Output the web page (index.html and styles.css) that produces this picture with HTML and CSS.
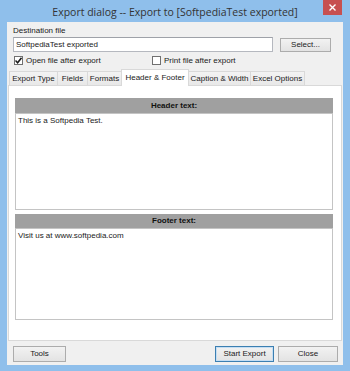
FILE: index.html
```html
<!DOCTYPE html>
<html lang="en">
<head>
    <meta charset="UTF-8">
    <title>Export dialog</title>
    <link rel="stylesheet" href="styles.css">
</head>
<body>
    <div class="window">
        <div class="titlebar">
            <div class="title">Export dialog -- Export to [SoftpediaTest exported]</div>
            <div class="close-btn">
                <svg width="7" height="7" viewBox="0 0 7 7"><path d="M0.5 0.5 L6.5 6.5 M6.5 0.5 L0.5 6.5" stroke="#ffffff" stroke-width="1.4"/></svg>
            </div>
        </div>

        <div class="client">
            <div class="dest-label">Destination file</div>
            <div class="dest-row">
                <div class="text-input">SoftpediaTest exported</div>
                <div class="btn select-btn">Select...</div>
            </div>

            <div class="check-row">
                <div class="check first">
                    <span class="box">
                        <svg width="7" height="7" viewBox="0 0 7 7"><path d="M0.5 3.5 L2.6 5.8 L6.5 0.8" fill="none" stroke="#1a1a1a" stroke-width="1.5"/></svg>
                    </span>
                    Open file after export
                </div>
                <div class="check">
                    <span class="box"></span>
                    Print file after export
                </div>
            </div>

            <div class="tabs">
                <div class="tab tab-type">Export Type</div>
                <div class="tab tab-fields">Fields</div>
                <div class="tab tab-formats">Formats</div>
                <div class="tab active">Header &amp; Footer</div>
                <div class="tab tab-caption">Caption &amp; Width</div>
                <div class="tab tab-excel">Excel Options</div>
            </div>

            <div class="panel">
                <div class="section-bar">Header text:</div>
                <div class="memo header-memo">This is a Softpedia Test.</div>
                <div class="section-bar footer-bar">Footer text:</div>
                <div class="memo footer-memo">Visit us at www.softpedia.com</div>
            </div>

            <div class="bottom-bar">
                <div class="btn tools-btn">Tools</div>
                <div class="spacer"></div>
                <div class="btn default start-btn">Start Export</div>
                <div class="btn close-dlg-btn">Close</div>
            </div>
        </div>
    </div>
</body>
</html>
```

FILE: styles.css
```css
body {
    margin: 0;
    font-family: 'Liberation Sans', Arial, sans-serif;
    font-size: 8px;
    color: #1a1a1a;
    background-color: #8fbfeb;
}

.window {
    width: 350px;
    height: 371px;
    display: flex;
    flex-direction: column;
    background-color: #8fbfeb;
}

.titlebar {
    height: 22px;
    display: flex;
    align-items: flex-start;
    padding-left: 27px;
    box-sizing: border-box;
}

.title {
    flex: 1;
    text-align: center;
    font-family: 'Open Sans', sans-serif;
    font-size: 10.5px;
    line-height: 22px;
    color: #333333;
    padding-top: 1px;
}

.close-btn {
    width: 19px;
    height: 15px;
    margin-right: 8px;
    background-color: #c75050;
    display: flex;
    align-items: center;
    justify-content: center;
}

.client {
    flex: 1;
    margin: 0 7px 6px 7px;
    background-color: #f0f0f0;
    display: flex;
    flex-direction: column;
    padding: 4px 0 3px 0;
    box-sizing: border-box;
}

.dest-label {
    height: 10px;
    line-height: 10px;
    padding-left: 6px;
}

.dest-row {
    display: flex;
    align-items: flex-end;
    margin-top: 1px;
    padding-left: 6px;
}

.text-input {
    width: 260px;
    height: 15px;
    box-sizing: border-box;
    border: 1px solid #b5b8bf;
    border-top-color: #9ea1a8;
    background-color: #ffffff;
    line-height: 13px;
    padding-left: 2px;
}

.btn {
    height: 14px;
    box-sizing: border-box;
    border: 1px solid #acacac;
    background: linear-gradient(#f2f2f2, #e3e3e3);
    text-align: center;
    line-height: 12px;
}

.select-btn {
    width: 51px;
    margin-left: 7px;
}

.check-row {
    display: flex;
    height: 11px;
    margin-top: 3px;
    padding-left: 7px;
    align-items: center;
}

.check {
    display: flex;
    align-items: center;
    gap: 3px;
    line-height: 11px;
}

.check.first {
    width: 138px;
}

.box {
    width: 9px;
    height: 9px;
    box-sizing: border-box;
    border: 1px solid #707070;
    background-color: #ffffff;
    display: flex;
    align-items: center;
    justify-content: center;
}

.tabs {
    display: flex;
    align-items: flex-end;
    height: 17px;
    margin-top: 2px;
    padding-left: 2px;
    position: relative;
    z-index: 1;
}

.tab {
    height: 14px;
    box-sizing: border-box;
    border: 1px solid #d9d9d9;
    border-bottom: none;
    border-right: none;
    background: linear-gradient(#f3f3f3, #e8e8e8);
    text-align: center;
    line-height: 13px;
    white-space: nowrap;
}

.tab-type { width: 48px; }
.tab-fields { width: 30px; }
.tab-formats { width: 34px; }
.tab-caption { width: 61px; }
.tab-excel { width: 55px; }

.tab:last-child {
    border-right: 1px solid #d9d9d9;
}

.tab.active {
    width: 68px;
    height: 17px;
    background: #ffffff;
    border-right: 1px solid #d9d9d9;
    margin-bottom: -1px;
    line-height: 15px;
}

.tab.active + .tab {
    border-left: none;
}

.panel {
    flex: 1;
    margin: 0 1px 0 1px;
    border: 1px solid #d9d9d9;
    background-color: #ffffff;
    padding: 12px 8px 0 6px;
    display: flex;
    flex-direction: column;
}

.section-bar {
    height: 15px;
    background-color: #a0a0a0;
    text-align: center;
    font-weight: bold;
    line-height: 15px;
    color: #111111;
}

.footer-bar {
    margin-top: 4px;
    height: 14px;
    line-height: 14px;
}

.memo {
    border: 1px solid #c4c4c4;
    background-color: #ffffff;
    box-sizing: border-box;
    padding: 2px 2px;
    line-height: 10px;
}

.header-memo {
    height: 97px;
}

.footer-memo {
    height: 92px;
}

.bottom-bar {
    display: flex;
    align-items: center;
    margin-top: 5px;
    padding: 0 5px 0 6px;
}

.bottom-bar .btn {
    height: 16px;
    line-height: 14px;
}

.tools-btn {
    width: 53px;
}

.spacer {
    flex: 1;
}

.start-btn {
    width: 59px;
}

.btn.default {
    border-color: #3c7fb1;
    box-shadow: inset 0 0 0 1px #c5def3;
}

.close-dlg-btn {
    width: 60px;
    margin-left: 4px;
}
```
